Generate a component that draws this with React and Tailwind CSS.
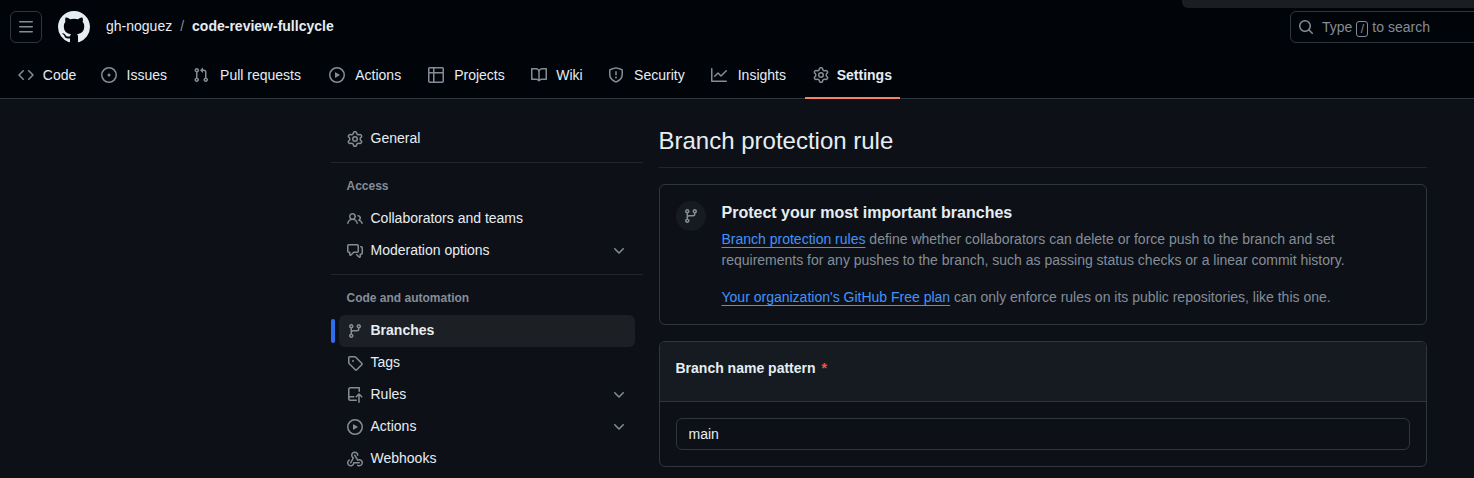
import React from "react";

const PATHS = {
  bars: "M1 2.75A.75.75 0 0 1 1.75 2h12.5a.75.75 0 0 1 0 1.5H1.75A.75.75 0 0 1 1 2.75Zm0 5A.75.75 0 0 1 1.75 7h12.5a.75.75 0 0 1 0 1.5H1.75A.75.75 0 0 1 1 7.75ZM1.75 12h12.5a.75.75 0 0 1 0 1.5H1.75a.75.75 0 0 1 0-1.5Z",
  mark: "M8 0c4.42 0 8 3.58 8 8a8.013 8.013 0 0 1-5.45 7.59c-.4.08-.55-.17-.55-.38 0-.27.01-1.13.01-2.2 0-.75-.25-1.23-.54-1.48 1.78-.2 3.65-.88 3.65-3.95 0-.88-.31-1.59-.82-2.15.08-.2.36-1.02-.08-2.12 0 0-.67-.22-2.2.82-.64-.18-1.32-.27-2-.27-.68 0-1.36.09-2 .27-1.53-1.03-2.2-.82-2.2-.82-.44 1.1-.16 1.92-.08 2.12-.51.56-.82 1.28-.82 2.15 0 3.06 1.86 3.75 3.64 3.95-.23.2-.44.55-.51 1.07-.46.21-1.61.55-2.33-.66-.15-.24-.6-.83-1.23-.82-.67.01-.27.38.01.53.34.19.73.9.82 1.13.16.45.68 1.31 2.69.94 0 .67.01 1.3.01 1.49 0 .21-.15.45-.55.38A7.995 7.995 0 0 1 0 8c0-4.42 3.58-8 8-8Z",
  code: "m11.28 3.22 4.25 4.25a.75.75 0 0 1 0 1.06l-4.25 4.25a.749.749 0 0 1-1.275-.326.749.749 0 0 1 .215-.734L13.94 8l-3.72-3.72a.749.749 0 0 1 .326-1.275.749.749 0 0 1 .734.215Zm-6.56 0a.751.751 0 0 1 1.042.018.751.751 0 0 1 .018 1.042L2.06 8l3.72 3.72a.749.749 0 0 1-.326 1.275.749.749 0 0 1-.734-.215L.47 8.53a.75.75 0 0 1 0-1.06Z",
  issue: "M8 9.5a1.5 1.5 0 1 0 0-3 1.5 1.5 0 0 0 0 3ZM8 0a8 8 0 1 1 0 16A8 8 0 0 1 8 0ZM1.5 8a6.5 6.5 0 1 0 13 0 6.5 6.5 0 0 0-13 0Z",
  pull: "M1.5 3.25a2.25 2.25 0 1 1 3 2.122v5.256a2.251 2.251 0 1 1-1.5 0V5.372A2.25 2.25 0 0 1 1.5 3.25Zm5.677-.177L9.573.677A.25.25 0 0 1 10 .854V2.5h1A2.5 2.5 0 0 1 13.5 5v5.628a2.251 2.251 0 1 1-1.5 0V5a1 1 0 0 0-1-1h-1v1.646a.25.25 0 0 1-.427.177L7.177 3.427a.25.25 0 0 1 0-.354ZM3.75 2.5a.75.75 0 1 0 0 1.5.75.75 0 0 0 0-1.5Zm0 9.5a.75.75 0 1 0 0 1.5.75.75 0 0 0 0-1.5Zm8.25.75a.75.75 0 1 0 1.5 0 .75.75 0 0 0-1.5 0Z",
  play: "M8 0a8 8 0 1 1 0 16A8 8 0 0 1 8 0ZM1.5 8a6.5 6.5 0 1 0 13 0 6.5 6.5 0 0 0-13 0Zm4.879-2.773 4.264 2.559a.25.25 0 0 1 0 .428l-4.264 2.559A.25.25 0 0 1 6 10.559V5.442a.25.25 0 0 1 .379-.215Z",
  table: "M0 1.75C0 .784.784 0 1.75 0h12.5C15.216 0 16 .784 16 1.75v12.5A1.75 1.75 0 0 1 14.25 16H1.75A1.75 1.75 0 0 1 0 14.25ZM6.5 6.5v8h7.75a.25.25 0 0 0 .25-.25V6.5Zm8-1.5V1.75a.25.25 0 0 0-.25-.25H6.5V5Zm-13 1.5v7.75c0 .138.112.25.25.25H5v-8ZM5 5V1.5H1.75a.25.25 0 0 0-.25.25V5Z",
  book: "M0 1.75A.75.75 0 0 1 .75 1h4.253c1.227 0 2.317.59 3 1.501A3.743 3.743 0 0 1 11.006 1h4.245a.75.75 0 0 1 .75.75v10.5a.75.75 0 0 1-.75.75h-4.507a2.25 2.25 0 0 0-1.591.659l-.622.621a.75.75 0 0 1-1.06 0l-.622-.621A2.25 2.25 0 0 0 5.258 13H.75a.75.75 0 0 1-.75-.75Zm7.251 10.324.004-5.073-.002-2.253A2.25 2.25 0 0 0 5.003 2.5H1.5v9h3.757a3.75 3.75 0 0 1 1.994.574ZM8.755 4.75l-.004 7.322a3.752 3.752 0 0 1 1.992-.572H14.5v-9h-3.495a2.25 2.25 0 0 0-2.25 2.25Z",
  shield: "M7.467.133a1.748 1.748 0 0 1 1.066 0l5.25 1.68A1.75 1.75 0 0 1 15 3.48V7c0 1.566-.32 3.182-1.303 4.682-.983 1.498-2.585 2.813-5.032 3.855a1.697 1.697 0 0 1-1.33 0c-2.447-1.042-4.049-2.357-5.032-3.855C1.32 10.182 1 8.566 1 7V3.48a1.75 1.75 0 0 1 1.217-1.667Zm.61 1.429a.25.25 0 0 0-.153 0l-5.25 1.68a.25.25 0 0 0-.174.238V7c0 1.358.275 2.666 1.057 3.86.784 1.194 2.121 2.34 4.366 3.297a.196.196 0 0 0 .154 0c2.245-.956 3.582-2.104 4.366-3.298C13.225 9.666 13.5 8.36 13.5 7V3.48a.251.251 0 0 0-.174-.237l-5.25-1.68ZM8.75 4.75v3a.75.75 0 0 1-1.5 0v-3a.75.75 0 0 1 1.5 0ZM9 10.5a1 1 0 1 1-2 0 1 1 0 0 1 2 0Z",
  graph: "M1.5 1.75V13.5h13.75a.75.75 0 0 1 0 1.5H.75a.75.75 0 0 1-.75-.75V1.75a.75.75 0 0 1 1.5 0Zm14.28 2.53-5.25 5.25a.75.75 0 0 1-1.06 0L7 7.06 4.28 9.78a.751.751 0 0 1-1.042-.018.751.751 0 0 1-.018-1.042l3.25-3.25a.75.75 0 0 1 1.06 0L10 7.94l4.72-4.72a.751.751 0 0 1 1.042.018.751.751 0 0 1 .018 1.042Z",
  gear: "M8 0a8.2 8.2 0 0 1 .701.031C9.444.095 9.99.645 10.16 1.29l.288 1.107c.018.066.079.158.212.224.231.114.454.243.668.386.123.082.233.09.299.071l1.103-.303c.644-.176 1.392.021 1.82.63.27.385.506.792.704 1.218.315.675.111 1.422-.364 1.891l-.814.806c-.049.048-.098.147-.088.294.016.257.016.515 0 .772-.01.147.038.246.088.294l.814.806c.475.469.679 1.216.364 1.891a7.977 7.977 0 0 1-.704 1.217c-.428.61-1.176.807-1.82.63l-1.102-.302c-.067-.019-.177-.011-.3.071a5.909 5.909 0 0 1-.668.386c-.133.066-.194.158-.211.224l-.29 1.106c-.168.646-.715 1.196-1.458 1.26a8.006 8.006 0 0 1-1.402 0c-.743-.064-1.289-.614-1.458-1.26l-.289-1.106c-.018-.066-.079-.158-.212-.224a5.738 5.738 0 0 1-.668-.386c-.123-.082-.233-.09-.299-.071l-1.103.303c-.644.176-1.392-.021-1.82-.63a8.12 8.12 0 0 1-.704-1.218c-.315-.675-.111-1.422.363-1.891l.815-.806c.05-.048.098-.147.088-.294a6.214 6.214 0 0 1 0-.772c.01-.147-.038-.246-.088-.294l-.815-.806C.635 6.045.431 5.298.746 4.623a7.92 7.92 0 0 1 .704-1.217c.428-.61 1.176-.807 1.82-.63l1.102.302c.067.019.177.011.3-.071.214-.143.437-.272.668-.386.133-.066.194-.158.211-.224l.29-1.106C6.009.645 6.556.095 7.299.03 7.53.01 7.764 0 8 0Zm-.571 1.525c-.036.003-.108.036-.137.146l-.289 1.105c-.147.561-.549.967-.998 1.189-.173.086-.34.183-.5.29-.417.278-.97.423-1.529.27l-1.103-.303c-.109-.03-.175.016-.195.045-.22.312-.412.644-.573.99-.014.031-.021.11.059.19l.815.806c.411.406.562.957.53 1.456a4.709 4.709 0 0 0 0 .582c.032.499-.119 1.05-.53 1.456l-.815.806c-.081.08-.073.159-.059.19.162.346.353.677.573.989.02.03.085.076.195.046l1.102-.303c.56-.153 1.113-.008 1.53.27.161.107.328.204.501.29.447.222.85.629.997 1.189l.289 1.105c.029.109.101.143.137.146a6.6 6.6 0 0 0 1.142 0c.036-.003.108-.036.137-.146l.289-1.105c.147-.561.549-.967.998-1.189.173-.086.34-.183.5-.29.417-.278.97-.423 1.529-.27l1.103.303c.109.029.175-.016.195-.045.22-.313.411-.644.573-.99.014-.031.021-.11-.059-.19l-.815-.806c-.411-.406-.562-.957-.53-1.456a4.709 4.709 0 0 0 0-.582c-.032-.499.119-1.05.53-1.456l.815-.806c.081-.08.073-.159.059-.19a6.464 6.464 0 0 0-.573-.989c-.02-.03-.085-.076-.195-.046l-1.102.303c-.56.153-1.113.008-1.53-.27a4.44 4.44 0 0 0-.501-.29c-.447-.222-.85-.629-.997-1.189l-.289-1.105c-.029-.11-.101-.143-.137-.146a6.6 6.6 0 0 0-1.142 0ZM11 8a3 3 0 1 1-6 0 3 3 0 0 1 6 0ZM9.5 8a1.5 1.5 0 1 0-3.001.001A1.5 1.5 0 0 0 9.5 8Z",
  people: "M2 5.5a3.5 3.5 0 1 1 5.898 2.549 5.508 5.508 0 0 1 3.034 4.084.75.75 0 1 1-1.482.235 4 4 0 0 0-7.9 0 .75.75 0 0 1-1.482-.236A5.507 5.507 0 0 1 3.102 8.05 3.493 3.493 0 0 1 2 5.5ZM11 4a3.001 3.001 0 0 1 2.22 5.018 5.01 5.01 0 0 1 2.56 3.012.749.749 0 0 1-.885.954.752.752 0 0 1-.549-.514 3.507 3.507 0 0 0-2.522-2.372.75.75 0 0 1-.574-.73v-.352a.75.75 0 0 1 .416-.672A1.5 1.5 0 0 0 11 5.5.75.75 0 0 1 11 4Zm-5.5-.5a2 2 0 1 0-.001 3.999A2 2 0 0 0 5.5 3.5Z",
  discussion: "M1.75 1h8.5c.966 0 1.75.784 1.75 1.75v5.5A1.75 1.75 0 0 1 10.25 10H7.061l-2.574 2.573A1.458 1.458 0 0 1 2 11.543V10h-.25A1.75 1.75 0 0 1 0 8.25v-5.5C0 1.784.784 1 1.75 1ZM1.5 2.75v5.5c0 .138.112.25.25.25h1a.75.75 0 0 1 .75.75v2.19l2.72-2.72a.749.749 0 0 1 .53-.22h3.5a.25.25 0 0 0 .25-.25v-5.5a.25.25 0 0 0-.25-.25h-8.5a.25.25 0 0 0-.25.25Zm13 2a.25.25 0 0 0-.25-.25h-.5a.75.75 0 0 1 0-1.5h.5c.966 0 1.75.784 1.75 1.75v5.5A1.75 1.75 0 0 1 14.25 12H14v1.543a1.458 1.458 0 0 1-2.487 1.03L9.22 12.28a.749.749 0 0 1 .326-1.275.749.749 0 0 1 .734.215l2.22 2.22v-2.19a.75.75 0 0 1 .75-.75h1a.25.25 0 0 0 .25-.25Z",
  branch: "M9.5 3.25a2.25 2.25 0 1 1 3 2.122V6A2.5 2.5 0 0 1 10 8.5H6a1 1 0 0 0-1 1v1.128a2.251 2.251 0 1 1-1.5 0V5.372a2.25 2.25 0 1 1 1.5 0v1.836A2.493 2.493 0 0 1 6 7h4a1 1 0 0 0 1-1v-.628A2.25 2.25 0 0 1 9.5 3.25Zm-6 0a.75.75 0 1 0 1.5 0 .75.75 0 0 0-1.5 0Zm8.25-.75a.75.75 0 1 0 0 1.5.75.75 0 0 0 0-1.5ZM4.25 12a.75.75 0 1 0 0 1.5.75.75 0 0 0 0-1.5Z",
  tag: "M1 7.775V2.75C1 1.784 1.784 1 2.75 1h5.025c.464 0 .91.184 1.238.513l6.25 6.25a1.75 1.75 0 0 1 0 2.474l-5.026 5.026a1.75 1.75 0 0 1-2.474 0l-6.25-6.25A1.752 1.752 0 0 1 1 7.775Zm1.5 0c0 .066.026.13.073.177l6.25 6.25a.25.25 0 0 0 .354 0l5.025-5.025a.25.25 0 0 0 0-.354l-6.25-6.25a.25.25 0 0 0-.177-.073H2.75a.25.25 0 0 0-.25.25ZM6 5a1 1 0 1 1 0 2 1 1 0 0 1 0-2Z",
  push: "M1 2.5A2.5 2.5 0 0 1 3.5 0h8.75a.75.75 0 0 1 .75.75v3.5a.75.75 0 0 1-1.5 0V1.5h-8a1 1 0 0 0-1 1v6.708A2.493 2.493 0 0 1 3.5 9h3.25a.75.75 0 0 1 0 1.5H3.5a1 1 0 0 0 0 2h5.75a.75.75 0 0 1 0 1.5H3.5A2.5 2.5 0 0 1 1 11.5Zm13.23 7.79-1.48-1.48v6.44a.75.75 0 0 1-1.5 0V8.81l-1.48 1.48a.751.751 0 0 1-1.042-.018.751.751 0 0 1-.018-1.042l2.75-2.75a.75.75 0 0 1 1.06 0l2.75 2.75a.749.749 0 0 1-.326 1.275.749.749 0 0 1-.734-.215Z",
  webhook: "M5.5 4.25a2.25 2.25 0 0 1 4.5 0 .75.75 0 0 0 1.5 0 3.75 3.75 0 1 0-6.14 2.889l-2.272 4.258a.75.75 0 0 0 1.324.706L7 7.25a.75.75 0 0 0-.309-1.015A2.25 2.25 0 0 1 5.5 4.25ZM7.364 3.607a.75.75 0 0 1 1.03.257l2.608 4.349a3.75 3.75 0 1 1-.628 6.785.75.75 0 0 1 .752-1.299 2.25 2.25 0 1 0-.033-3.88.75.75 0 0 1-1.03-.256L7.107 4.636a.75.75 0 0 1 .257-1.03ZM2.9 8.776A.75.75 0 0 1 2.625 9.8 2.25 2.25 0 1 0 6 11.75a.75.75 0 0 1 .75-.751h5.5a.75.75 0 0 1 0 1.5H7.425a3.751 3.751 0 1 1-5.55-3.998.75.75 0 0 1 1.024.274Z",
  chevron: "M12.78 5.22a.749.749 0 0 1 0 1.06l-4.25 4.25a.749.749 0 0 1-1.06 0L3.22 6.28a.749.749 0 1 1 1.06-1.06L8 8.939l3.72-3.719a.749.749 0 0 1 1.06 0Z",
  search: "M10.68 11.74a6 6 0 0 1-7.922-8.982 6 6 0 0 1 8.982 7.922l3.04 3.04a.749.749 0 0 1-.326 1.275.749.749 0 0 1-.734-.215ZM11.5 7a4.499 4.499 0 1 0-8.997 0A4.499 4.499 0 0 0 11.5 7Z",
};

function Icon({ name, className = "size-4 text-[#848d97]" }) {
  return (
    <svg viewBox="0 0 16 16" fill="currentColor" aria-hidden="true" className={`shrink-0 ${className}`}>
      <path d={PATHS[name]} />
    </svg>
  );
}

const TABS = [
  ["code", "Code"],
  ["issue", "Issues"],
  ["pull", "Pull requests"],
  ["play", "Actions"],
  ["table", "Projects"],
  ["book", "Wiki"],
  ["shield", "Security"],
  ["graph", "Insights"],
  ["gear", "Settings", true],
];

function Tab({ icon, label, active }) {
  return (
    <a className={`flex items-center gap-2 border-b-2 px-2 pt-0.5 ${active ? "border-[#f78166] font-bold" : "border-transparent"}`}>
      <Icon name={icon} />
      <span
        data-content={label}
        className="text-center leading-5 before:invisible before:block before:h-0 before:overflow-hidden before:font-bold before:content-[attr(data-content)]"
      >
        {label}
      </span>
    </a>
  );
}

function Header() {
  return (
    <header className="flex h-[99px] flex-col justify-between border-b border-[#30363d] bg-[#010409]">
      <div className="flex items-center pt-[11px] pl-2.5">
        <button className="grid size-8 place-items-center rounded-md border border-[#30363d]">
          <Icon name="bars" />
        </button>
        <Icon name="mark" className="ml-4 size-8 text-[#e6edf3]" />
        <nav className="ml-4 flex -translate-y-px leading-[21px]">
          <a>gh-noguez</a>
          <span className="px-2 text-[#848d97]">/</span>
          <a className="font-bold">code-review-fullcycle</a>
        </nav>
        <button className="-mr-16 ml-auto flex h-8 w-[248px] items-center rounded-md border border-[#30363d] pl-[7px] text-[#848d97]">
          <Icon name="search" />
          <span className="ml-2 flex items-center gap-1">
            Type
            <kbd className="mt-[3px] grid h-4 w-3 place-items-center rounded-[3px] border border-[#848d97] font-['Liberation_Sans',sans-serif] text-xs leading-none">
              /
            </kbd>
            to search
          </span>
        </button>
      </div>
      <nav className="-mb-px flex h-12 gap-2 px-2.5">
        {TABS.map(([icon, label, active]) => (
          <Tab key={label} icon={icon} label={label} active={active} />
        ))}
      </nav>
    </header>
  );
}

function Item({ icon, label, active, expandable }) {
  return (
    <li className="flex h-8 items-center">
      <span className={`mr-1 h-6 w-1 rounded-md ${active ? "bg-[#2f6feb]" : ""}`} />
      <a className={`mr-2 flex h-8 flex-1 items-center gap-2 rounded-md px-2 ${active ? "bg-[#1c2024] font-bold" : ""}`}>
        <Icon name={icon} />
        <span className="mb-0.5 flex-1 leading-5">{label}</span>
        {expandable && <Icon name="chevron" />}
      </a>
    </li>
  );
}

function Section({ title, children }) {
  return (
    <section className="mt-[7px] border-t border-[#21262d]">
      <h3 className="flex h-10 items-center pt-1.5 pl-4 text-xs font-bold text-[#848d97]">{title}</h3>
      <ul>{children}</ul>
    </section>
  );
}

function Sidebar() {
  return (
    <aside className="w-[312px] shrink-0">
      <ul>
        <Item icon="gear" label="General" />
      </ul>
      <Section title="Access">
        <Item icon="people" label="Collaborators and teams" />
        <Item icon="discussion" label="Moderation options" expandable />
      </Section>
      <Section title="Code and automation">
        <Item icon="branch" label="Branches" active />
        <Item icon="tag" label="Tags" />
        <Item icon="push" label="Rules" expandable />
        <Item icon="play" label="Actions" expandable />
        <Item icon="webhook" label="Webhooks" />
      </Section>
    </aside>
  );
}

function TextLink({ children }) {
  return <a className="text-[#4493f8] underline decoration-1 underline-offset-[3px] [text-decoration-skip-ink:none]">{children}</a>;
}

function Main() {
  return (
    <main className="w-[768px] shrink-0">
      <h2 className="h-[45px] border-b border-[#21262d] text-2xl leading-9">Branch protection rule</h2>
      <section className="mt-4 flex h-[141px] gap-4 rounded-md border border-[#30363d] p-4">
        <span className="grid size-[30px] shrink-0 place-items-center rounded-full bg-[#161b22]">
          <Icon name="branch" />
        </span>
        <div className="text-[#848d97]">
          <h3 className="mb-1 text-base leading-6 font-bold text-[#e6edf3]">Protect your most important branches</h3>
          <p className="leading-[21px]">
            <TextLink>Branch protection rules</TextLink> define whether collaborators can delete or force push to the branch and set
            <br />
            requirements for any pushes to the branch, such as passing status checks or a linear commit history.
          </p>
          <p className="mt-4 leading-[21px]">
            <TextLink>Your organization's GitHub Free plan</TextLink> can only enforce rules on its public repositories, like this one.
          </p>
        </div>
      </section>
      <section className="mt-4 overflow-hidden rounded-md border border-[#30363d]">
        <div className="h-[60px] border-b border-[#30363d] bg-[#161b22] px-4 pt-4">
          <label className="leading-[21px] font-bold">
            Branch name pattern <span className="ml-0.5 text-[#f85149]">*</span>
          </label>
        </div>
        <div className="p-4">
          <input
            defaultValue="main"
            className="block h-8 w-full rounded-md border border-[#30363d] bg-[#0d1117] px-3 leading-5 outline-none"
          />
        </div>
      </section>
    </main>
  );
}

export default function App() {
  return (
    <div className="relative h-[478px] overflow-hidden bg-[#0d1117] font-['Liberation_Sans',Arial,sans-serif] text-sm text-[#e6edf3]">
      <div className="absolute top-0 right-0 h-2 w-[292px] rounded-bl-md bg-[#1a1e21]" />
      <Header />
      <div className="flex gap-4 pt-6 pl-[330.5px]">
        <Sidebar />
        <Main />
      </div>
    </div>
  );
}
